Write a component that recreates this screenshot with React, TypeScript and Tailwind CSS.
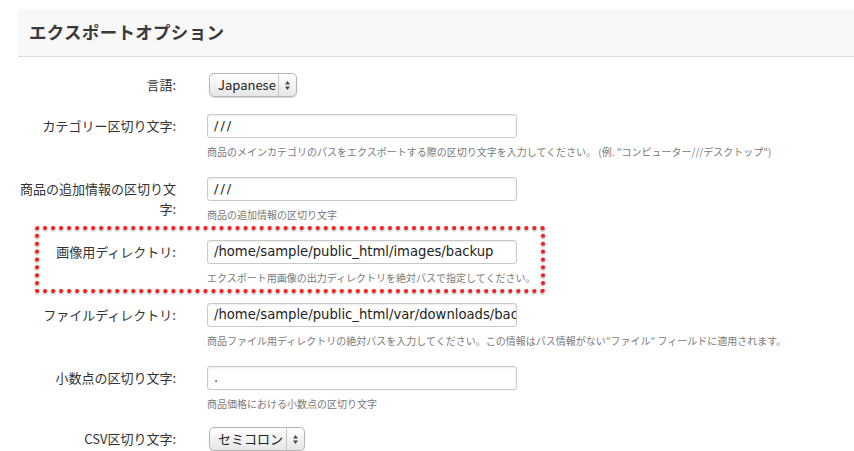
import React from 'react';

const jp = { fontFamily: '"Noto Sans CJK JP", "Noto Sans", sans-serif' };
const mono = { fontFamily: '"DejaVu Sans", "Noto Sans CJK JP", sans-serif' };

const Arrows: React.FC = () => (
  <svg width="7" height="11" viewBox="0 0 7 11" className="block">
    <path d="M3.5 1 L6 4.5 L1 4.5 Z" fill="#444" />
    <path d="M3.5 10 L6 6.5 L1 6.5 Z" fill="#444" />
  </svg>
);

const FakeSelect: React.FC<{ value: string; width: string }> = ({ value, width }) => (
  <div
    className={`${width} h-[24px] ml-[2px] flex items-stretch rounded-[5px] border border-[#b5b5b5] bg-gradient-to-b from-white to-[#e6e6e6] shadow-[0_1px_1px_rgba(0,0,0,0.15)]`}
  >
    <span className="flex-1 flex items-center pl-[8px] text-[13px] text-[#222]">{value}</span>
    <span className="w-[18px] border-l border-[#c8c8c8] flex items-center justify-center">
      <Arrows />
    </span>
  </div>
);

const TextInput: React.FC<{ value: string; big?: boolean }> = ({ value, big }) => (
  <div className="w-[310px] h-[24px] rounded-[3px] border border-[#c8c8c8] bg-white shadow-[inset_0_1px_2px_rgba(0,0,0,0.08)] flex items-center px-[6px] overflow-hidden">
    <span
      className={`whitespace-nowrap text-[#222] ${big ? 'text-[13.2px]' : 'text-[13px] tracking-[2px]'}`}
      style={mono}
    >
      {value}
    </span>
  </div>
);

const Help: React.FC<{ children: React.ReactNode }> = ({ children }) => (
  <p className="mt-[7px] text-[10px] leading-[14px] text-[#7a7a7a] whitespace-nowrap">{children}</p>
);

const Row: React.FC<{ label: string; className?: string; children: React.ReactNode }> = ({ label, className, children }) => (
  <div className={`flex ${className ?? ''}`}>
    <label className="w-[158px] shrink-0 text-right text-[13px] leading-5 pt-[2px] text-[#333]">{label}</label>
    <div className="ml-[31px]">{children}</div>
  </div>
);

export default function App() {
  return (
    <div className="w-[854px] h-[451px] overflow-hidden bg-white" style={jp}>
      {/* Header */}
      <div className="pt-[9px] pl-[18px]">
        <div className="h-[48px] bg-[#f8f8f8] border-b border-[#dcdcdc] flex items-center pl-[11px]">
          <h2 className="text-[17.5px] font-bold text-[#3a3a3a] tracking-[0.3px]">エクスポートオプション</h2>
        </div>
      </div>

      <div className="pl-[18px] pt-[16px]">
        <Row label="言語:" className="mb-[17px]">
          <FakeSelect value="Japanese" width="w-[88px]" />
        </Row>

        <Row label="カテゴリー区切り文字:" className="mb-[18px]">
          <TextInput value="///" />
          <Help>商品のメインカテゴリのパスをエクスポートする際の区切り文字を入力してください。 (例. "コンピューター///デスクトップ")</Help>
        </Row>

        <Row label="商品の追加情報の区切り文字:" className="mb-[18px]">
          <TextInput value="///" />
          <Help>商品の追加情報の区切り文字</Help>
        </Row>

        <div className="relative mb-[18px]">
          <Row label="画像用ディレクトリ:">
            <TextInput value="/home/sample/public_html/images/backup" big />
            <Help>エクスポート用画像の出力ディレクトリを絶対パスで指定してください。</Help>
          </Row>
          {/* annotation */}
          <div className="absolute left-[17px] top-[-14px] w-[510px] h-[67px] rounded-[4px] border-[4px] border-dotted border-[#ff1a1a] drop-shadow-[0_1px_1px_rgba(0,0,0,0.45)]" />
        </div>

        <Row label="ファイルディレクトリ:" className="mb-[18px]">
          <TextInput value="/home/sample/public_html/var/downloads/backup" big />
          <Help>商品ファイル用ディレクトリの絶対パスを入力してください。この情報はパス情報がない"ファイル" フィールドに適用されます。</Help>
        </Row>

        <Row label="小数点の区切り文字:" className="mb-[16px]">
          <TextInput value="." />
          <Help>商品価格における小数点の区切り文字</Help>
        </Row>

        <Row label="CSV区切り文字:">
          <FakeSelect value="セミコロン" width="w-[96px]" />
        </Row>
      </div>
    </div>
  );
}
